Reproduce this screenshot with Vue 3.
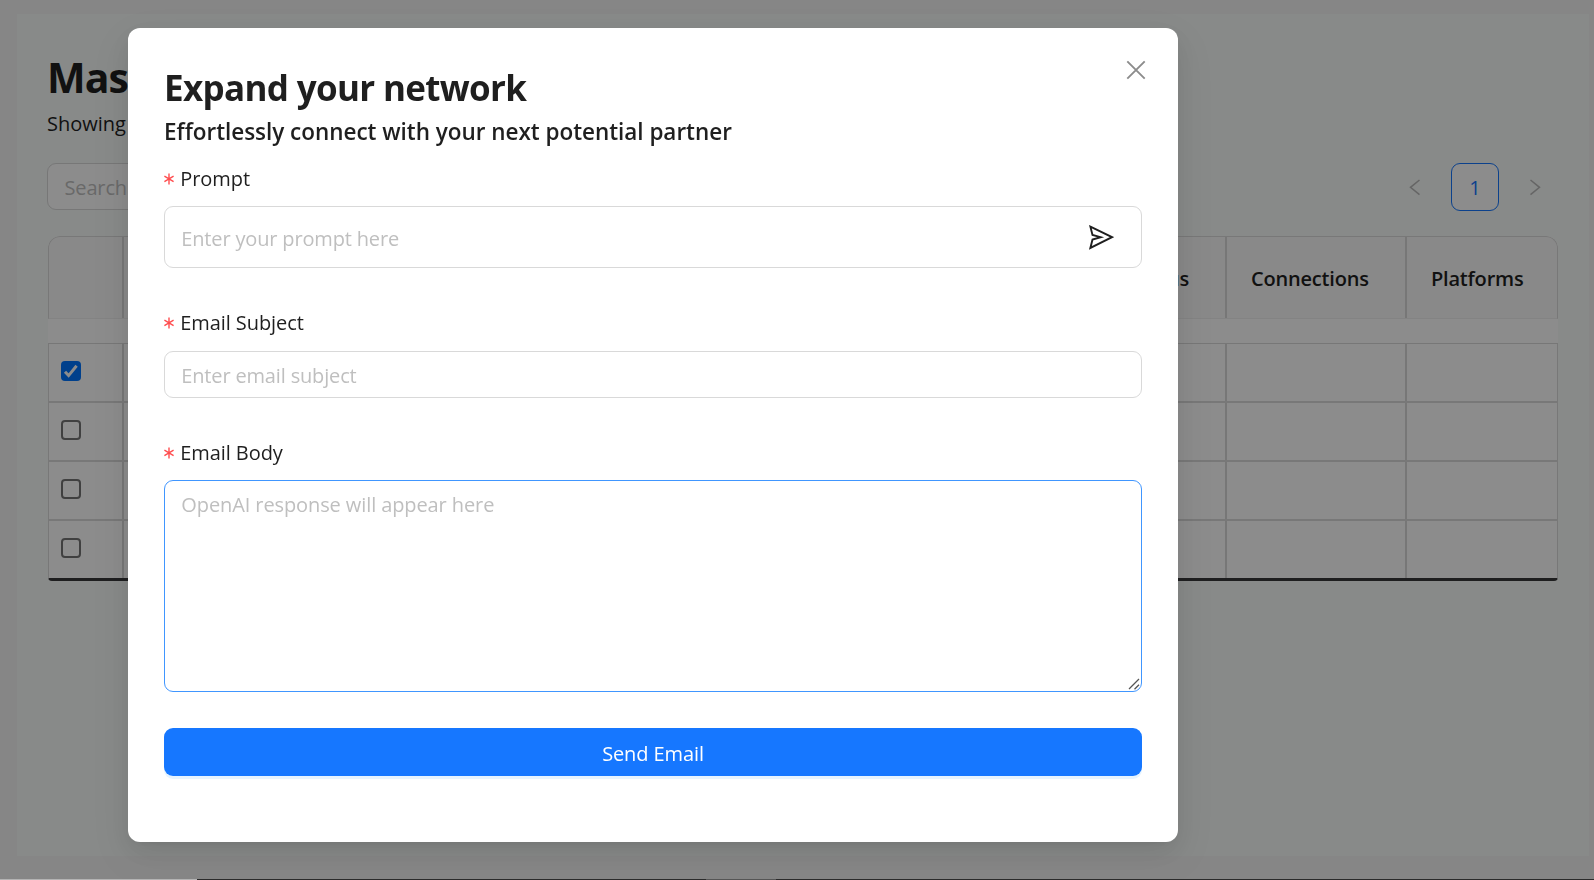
<script setup>
const rows = [true, false, false, false]
const heads = ['', ' ', 'us', 'Connections', 'Platforms']
</script>

<template>
  <div class="page">
    <main class="panel">
      <h1>Mas</h1>
      <p class="showing">Showing</p>
      <div class="toolbar">
        <div class="search">Search</div>
        <nav class="pager">
          <svg width="12" height="17" viewBox="0 0 12 17"><path d="M10.5 1 1.5 8.3l9 7.3" /></svg>
          <span class="current">1</span>
          <svg width="12" height="17" viewBox="0 0 12 17"><path d="M1.5 1l9 7.3-9 7.3" /></svg>
        </nav>
      </div>
      <div class="table">
        <div class="row head">
          <div v-for="h in heads" :key="h" class="cell"><span>{{ h }}</span></div>
        </div>
        <div class="spacer"></div>
        <div v-for="(checked, i) in rows" :key="i" class="row">
          <div class="cell">
            <span class="box" :class="{ checked }">
              <svg v-if="checked" width="20" height="20" viewBox="0 0 20 20"><path d="M4 10.8l3.6 3.8L15.6 4.8" /></svg>
            </span>
          </div>
          <div v-for="n in 4" :key="n" class="cell"></div>
        </div>
      </div>
    </main>
    <div class="strip"><i></i><i></i><i></i><i></i></div>
  </div>
  <div class="mask">
    <section class="modal">
      <svg class="close" width="20" height="20" viewBox="0 0 20 20"><path d="M1.3 1.3l17.4 17.4M18.7 1.3L1.3 18.7" /></svg>
      <h2><span>Expand your network</span></h2>
      <h3><span>Effortlessly connect with your next potential partner</span></h3>
      <label class="l1"><i><svg width="10" height="12" viewBox="0 0 10 12"><path d="M5 .4v11M.4 3.2l9.2 5.4M9.6 3.2L.4 8.6" /></svg></i><span>Prompt</span></label>
      <div class="field prompt">
        <span>Enter your prompt here</span>
        <svg width="25" height="25" viewBox="0 0 25 25"><path d="M1.4 1.7L23 12.2 1.4 22.9l2.1-8.3 8.2-2.4-8.2-2.3z" /></svg>
      </div>
      <label class="l2"><i><svg width="10" height="12" viewBox="0 0 10 12"><path d="M5 .4v11M.4 3.2l9.2 5.4M9.6 3.2L.4 8.6" /></svg></i><span>Email Subject</span></label>
      <div class="field subject"><span>Enter email subject</span></div>
      <label class="l3"><i><svg width="10" height="12" viewBox="0 0 10 12"><path d="M5 .4v11M.4 3.2l9.2 5.4M9.6 3.2L.4 8.6" /></svg></i><span>Email Body</span></label>
      <div class="field body">
        <span>OpenAI response will appear here</span>
        <svg class="grip" width="12" height="12" viewBox="0 0 12 12"><path d="M1 11L11 1M6.5 11.2L11 6.8" /></svg>
      </div>
      <button><span>Send Email</span></button>
    </section>
  </div>
</template>

<style>
body { margin: 0; overflow: hidden; }
</style>

<style scoped>
* { box-sizing: border-box; }
svg { display: block; fill: none; }
h1, h2, h3, p { margin: 0; white-space: nowrap; }
span { white-space: nowrap; }
.page {
  height: 880px;
  padding: 14px 5px 0 17px;
  background: #f5f5f5;
  display: flex;
  flex-direction: column;
  font-family: "Open Sans", "Noto Sans", sans-serif;
  font-size: 20px;
  color: #1f1f1f;
  overflow: hidden;
}
.panel { height: 842px; padding: 33px 31px 0 30px; background: #f7fbf9; }
h1 { font-size: 41px; line-height: 60px; font-weight: 700; letter-spacing: -0.9px; }
.showing { margin-top: 3px; line-height: 28px; letter-spacing: 0; }
.toolbar { margin-top: 25px; display: flex; justify-content: space-between; height: 48px; }
.search {
  width: 300px; height: 47px; border: 1px solid #d9d9d9; border-radius: 9px; background: #fff;
  padding-left: 16.5px; line-height: 47px; color: #bfbfbf; letter-spacing: -0.15px;
}
.pager { display: flex; align-items: center; gap: 30px; padding-right: 17px; }
.pager svg { stroke: #b8b8b8; stroke-width: 1.5; }
.current {
  width: 48px; height: 48px; border: 1px solid #1677ff; border-radius: 9px; background: #fff;
  color: #1677ff; font-weight: 500; line-height: 47px; text-align: center;
}
.table { margin: 25px 0 0 1px; border-radius: 12px 12px 4px 4px; background: #fff; overflow: hidden; height: 345px; }
.row {
  display: grid; grid-template-columns: 75px 800px 303px 180px 1fr; height: 59px;
  border: 1px solid #dadada; border-top: 0; border-bottom-width: 2px;
}
.row:last-child { height: 60px; border-bottom: 3px solid #38383a; }
.head { height: 83px; border: 1px solid #dadada; border-bottom: 1px solid #efefef; background: #fafafa; border-radius: 12px 12px 0 0; font-weight: 600; }
.cell { border-right: 2px solid #d9d9d9; padding: 17px 0 0 12px; }
.cell:last-child { border-right: 0; }
.head .cell { padding: 28px 0 0 24px; line-height: 28px; letter-spacing: -0.2px; }
.head .cell:nth-child(3) { text-align: right; padding-right: 36px; }
.spacer { height: 25px; border-bottom: 1px solid #d9d9d9; }
.box { display: block; width: 20px; height: 20px; border: 2px solid #767676; border-radius: 4px; background: #fff; }
.box.checked { background: #0075ff; border: 0; }
.box path { stroke: #fff; stroke-width: 3; }
.strip { margin: 23px -5px 0 -17px; height: 1px; display: flex; }
.strip i { background: #2b2b2b; }
.strip i:nth-child(1) { width: 197px; background: #b4b4b4; }
.strip i:nth-child(2) { width: 509px; }
.strip i:nth-child(3) { width: 70px; background: #555; }
.strip i:nth-child(4) { flex: 1; }
.mask {
  position: fixed; left: 0; top: 0; width: 1594px; height: 879px; background: rgba(0, 0, 0, .45);
  padding: 28px 0 0 128px; overflow: hidden;
  font-family: "Open Sans", "Noto Sans", sans-serif; font-size: 20px; color: #1f1f1f;
}
.modal {
  position: relative; width: 1050px; height: 814px; padding: 36px; background: #fff; border-radius: 12px;
  display: flex; flex-direction: column;
  box-shadow: 0 9px 24px 0 rgba(0, 0, 0, .08), 0 4px 9px -6px rgba(0, 0, 0, .12), 0 14px 42px 12px rgba(0, 0, 0, .05);
}
.close { position: absolute; right: 32px; top: 32px; stroke: #8c8c8c; stroke-width: 1.9; }
h2 { font-size: 35px; line-height: 47px; height: 46px; font-weight: 700; letter-spacing: -0.67px; }
h3 { font-size: 22.5px; line-height: 36px; height: 36px; margin-top: 4px; font-weight: 600; letter-spacing: -0.03px; }
label { display: flex; height: 32px; line-height: 32px; letter-spacing: -0.08px; }
label i { width: 16.3px; padding-top: 9.5px; }
label svg { stroke: #ff4d4f; stroke-width: 1.4; }
.l1 { margin-top: 13px; }
.field { position: relative; border: 1px solid #d9d9d9; border-radius: 9px; padding-left: 16.3px; color: #bfbfbf; letter-spacing: -0.16px; }
.prompt { margin-top: 11px; height: 62px; line-height: 63px; display: flex; justify-content: space-between; padding-right: 27.5px; }
.prompt svg { margin-top: 18px; stroke: #1f1f1f; stroke-width: 1.9; }
.l2 { margin-top: 39px; }
.subject { margin-top: 12px; height: 47px; line-height: 47px; }
.l3 { margin-top: 39px; }
.body { margin-top: 11px; height: 212px; padding-top: 8px; line-height: 32px; border-color: #4096ff; letter-spacing: -0.1px; }
.grip { position: absolute; right: 1.5px; bottom: 1px; stroke: #555; stroke-width: 1.3; }
button {
  margin-top: 36px; height: 48px; flex: none; border: 0; border-radius: 9px; background: #1677ff; color: #fff;
  font: inherit; line-height: 51px; padding: 0; letter-spacing: -0.1px; box-shadow: 0 3px 0 rgba(5, 145, 255, .1);
}
</style>
